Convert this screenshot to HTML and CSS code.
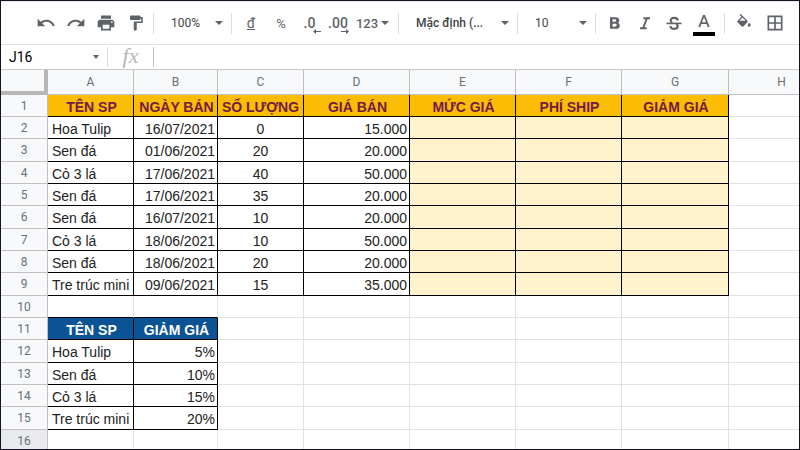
FILE: index.html
```html
<!doctype html>
<html lang="vi">
<head>
<meta charset="utf-8">
<title>Bảng tính</title>
<link rel="stylesheet" href="styles.css">
</head>

<body>
<div class="app">
	<div class="toolbar">
		<button type="button" aria-label="Hoàn tác"><svg width="20" height="20" viewBox="0 0 24 24"><path d="M12.500 8c-2.650 0-5.050.990-6.900 2.600L2 7v9h9l-3.620-3.620c1.390-1.160 3.160-1.880 5.120-1.880 3.540 0 6.550 2.310 7.600 5.500l2.370-.78C21.080 11.030 17.150 8 12.500 8z"/></svg></button>
		<button type="button" aria-label="Làm lại"><svg width="20" height="20" viewBox="0 0 24 24"><path d="M18.400 10.600C16.550 8.990 14.150 8 11.500 8c-4.650 0-8.580 3.030-9.960 7.220L3.900 16c1.050-3.190 4.050-5.500 7.600-5.500 1.950 0 3.730.72 5.120 1.880L13 16h9V7l-3.600 3.600z"/></svg></button>
		<button type="button" aria-label="In"><svg width="20" height="20" viewBox="0 0 24 24"><path d="M19 8H5c-1.660 0-3 1.340-3 3v6h4v4h12v-4h4v-6c0-1.660-1.340-3-3-3zm-3 11H8v-5h8v5zm3-7c-.55 0-1-.45-1-1s.45-1 1-1 1 .45 1 1-.45 1-1 1zm-1-9H6v4h12V3z"/></svg></button>
		<button type="button" aria-label="Sao chép định dạng"><svg width="18" height="18" viewBox="0 0 24 24"><path d="M18 4V3c0-.55-.45-1-1-1H5c-.55 0-1 .45-1 1v4c0 .55.45 1 1 1h12c.55 0 1-.45 1-1V6h1v4H9v11c0 .55.45 1 1 1h2c.55 0 1-.45 1-1v-9h8V4h-3z"/></svg></button>
		<span class="sep"></span>
		<span class="dropdown zoom">
			<select aria-label="Thu phóng"><option>100%</option></select>
			<svg width="8" height="4" viewBox="0 0 8 4"><path d="M0 0h8L4 4z"/></svg>
		</span>
		<span class="sep"></span>
		<div class="numbers">
			<button type="button" class="dong">đ</button>
			<button type="button" class="percent">%</button>
			<button type="button" class="decimal less" aria-label="Giảm số thập phân">.0<svg width="8" height="5" viewBox="0 0 8 5"><path d="M3 0v2h5v1H3v2L0 2.500z"/></svg></button>
			<button type="button" class="decimal more" aria-label="Tăng số thập phân">.00<svg width="8" height="5" viewBox="0 0 8 5"><path d="M5 0v2H0v1h5v2l3-2.500z"/></svg></button>
			<button type="button" class="formats">123<svg width="8" height="4" viewBox="0 0 8 4"><path d="M0 0h8L4 4z"/></svg></button>
		</div>
		<span class="sep"></span>
		<span class="dropdown font">
			<select aria-label="Phông chữ"><option>Mặc định (...</option></select>
			<svg width="8" height="4" viewBox="0 0 8 4"><path d="M0 0h8L4 4z"/></svg>
		</span>
		<span class="sep"></span>
		<span class="dropdown size">
			<select aria-label="Cỡ chữ"><option>10</option></select>
			<svg width="8" height="4" viewBox="0 0 8 4"><path d="M0 0h8L4 4z"/></svg>
		</span>
		<span class="sep"></span>
		<div class="format">
			<button type="button" aria-label="In đậm"><svg width="20" height="20" viewBox="0 0 24 24"><path d="M15.600 11.790c.970-.67 1.650-1.770 1.650-2.790 0-2.260-1.750-4-4-4H6v14h8.040c2.090 0 3.710-1.700 3.710-3.790 0-1.520-.86-2.820-2.150-3.420zM9 7.500h3c.83 0 1.500.67 1.500 1.500s-.67 1.500-1.500 1.500H9v-3zm3.500 9H9V13h3.500c.83 0 1.500.67 1.500 1.500s-.67 1.500-1.500 1.500z"/></svg></button>
			<button type="button" aria-label="In nghiêng"><svg width="20" height="20" viewBox="0 0 24 24"><path d="M10 5v2.500h2.600l-3.700 9.500H6v2.500h8V17h-2.600l3.700-9.500H18V5z"/></svg></button>
			<button type="button" aria-label="Gạch ngang"><svg width="20" height="20" viewBox="0 0 24 24"><path d="M3 11.500h18v2H3z"/><path d="M16.500 9c0-2-1.800-3.200-4.300-3.200S8 7 8 8.800c0 1.100.6 1.900 1.800 2.500M14.500 13.500c1.300.6 2 1.300 2 2.500 0 1.800-1.700 3-4.200 3-2.700 0-4.600-1.200-4.600-3.400" fill="none" stroke="#5f6368" stroke-width="2.500"/></svg></button>
			<button type="button" aria-label="Màu chữ"><svg width="22" height="26" viewBox="0 0 22 26"><path d="M10 5h2l4.700 12h-2l-1.100-3H8.400l-1.100 3h-2zm1 2.200L9 12.300h4z"/><path class="ink" d="M0 22h22v4H0z"/></svg></button>
		</div>
		<span class="sep"></span>
		<div class="fill">
			<button type="button" aria-label="Màu nền"><svg width="18" height="18" viewBox="0 0 24 24"><path d="M16.560 8.940L7.620 0 6.210 1.410l2.380 2.380-5.150 5.150c-.59.590-.59 1.540 0 2.120l5.500 5.500c.29.290.68.440 1.060.440s.77-.15 1.060-.44l5.500-5.500c.59-.58.59-1.530 0-2.120zM5.800 9L10 4.800 14.200 9H5.800zM19 11.500s-2 2.170-2 3.500c0 1.100.9 2 2 2s2-.9 2-2c0-1.330-2-3.500-2-3.500z"/></svg></button>
			<button type="button" aria-label="Đường viền"><svg width="20" height="20" viewBox="0 0 24 24"><path d="M3 3v18h18V3H3zm8 16H5v-6h6v6zm0-8H5V5h6v6zm8 8h-6v-6h6v6zm0-8h-6V5h6v6z"/></svg></button>
		</div>
	</div>

	<div class="formula">
		<span class="dropdown namebox">
			<input type="text" value="J16" aria-label="Ô hiện tại">
			<svg width="6" height="4" viewBox="0 0 6 4"><path d="M0 0h6L3 4z"/></svg>
		</span>
		<label for="fx">fx</label>
		<input type="text" id="fx">
	</div>

	<div class="sheet">
		<table>
			<colgroup>
				<col class="w-num"><col class="w-a"><col class="w-b"><col class="w-a">
				<col class="w-d"><col class="w-d"><col class="w-d"><col class="w-g"><col>
			</colgroup>
			<thead>
				<tr><th class="corner"></th><th>A</th><th>B</th><th>C</th><th>D</th><th>E</th><th>F</th><th>G</th><th>H</th></tr>
			</thead>
			<tbody>
				<tr class="data title"><th>1</th><td>TÊN SP</td><td>NGÀY BÁN</td><td>SỐ LƯỢNG</td><td>GIÁ BÁN</td><td>MỨC GIÁ</td><td>PHÍ SHIP</td><td>GIẢM GIÁ</td><td></td></tr>
				<tr class="data"><th>2</th><td>Hoa Tulip</td><td>16/07/2021</td><td>0</td><td>15.000</td><td></td><td></td><td></td><td></td></tr>
				<tr class="data"><th>3</th><td>Sen đá</td><td>01/06/2021</td><td>20</td><td>20.000</td><td></td><td></td><td></td><td></td></tr>
				<tr class="data"><th>4</th><td>Cỏ 3 lá</td><td>17/06/2021</td><td>40</td><td>50.000</td><td></td><td></td><td></td><td></td></tr>
				<tr class="data"><th>5</th><td>Sen đá</td><td>17/06/2021</td><td>35</td><td>20.000</td><td></td><td></td><td></td><td></td></tr>
				<tr class="data"><th>6</th><td>Sen đá</td><td>16/07/2021</td><td>10</td><td>20.000</td><td></td><td></td><td></td><td></td></tr>
				<tr class="data"><th>7</th><td>Cỏ 3 lá</td><td>18/06/2021</td><td>10</td><td>50.000</td><td></td><td></td><td></td><td></td></tr>
				<tr class="data"><th>8</th><td>Sen đá</td><td>18/06/2021</td><td>20</td><td>20.000</td><td></td><td></td><td></td><td></td></tr>
				<tr class="data"><th>9</th><td>Tre trúc mini</td><td>09/06/2021</td><td>15</td><td>35.000</td><td></td><td></td><td></td><td></td></tr>
				<tr class="gap"><th>10</th><td></td><td></td><td></td><td></td><td></td><td></td><td></td><td></td></tr>
				<tr class="sale sale-title"><th>11</th><td>TÊN SP</td><td>GIẢM GIÁ</td><td></td><td></td><td></td><td></td><td></td><td></td></tr>
				<tr class="sale"><th>12</th><td>Hoa Tulip</td><td>5%</td><td></td><td></td><td></td><td></td><td></td><td></td></tr>
				<tr class="sale"><th>13</th><td>Sen đá</td><td>10%</td><td></td><td></td><td></td><td></td><td></td><td></td></tr>
				<tr class="sale"><th>14</th><td>Cỏ 3 lá</td><td>15%</td><td></td><td></td><td></td><td></td><td></td><td></td></tr>
				<tr class="sale"><th>15</th><td>Tre trúc mini</td><td>20%</td><td></td><td></td><td></td><td></td><td></td><td></td></tr>
				<tr class="current"><th>16</th><td></td><td></td><td></td><td></td><td></td><td></td><td></td><td></td></tr>
			</tbody>
		</table>
	</div>
</div>
</body>
</html>
```
FILE: styles.css
```css
*{ margin:0; padding:0; box-sizing:border-box;}
body{ background:#fff; font-family:Roboto,sans-serif; overflow:hidden;}
button,select,input{ border:0; background:none; font-family:inherit; color:#444; outline:none;}
svg{ display:block; fill:#5f6368; flex:none;}
.app{ height:100vh; border:1px solid #14121f; display:flex; flex-direction:column; overflow:hidden;}

/* toolbar */
.toolbar{ height:44px; flex:none; display:flex; align-items:center; padding-left:30px; border-top:1px solid #e8e6ee; border-bottom:1px solid #e0e2e4;}
.toolbar button{ width:30px; height:28px; flex:none; display:flex; align-items:center; justify-content:center; font-size:13px; font-weight:500; color:#5f6368;}
.sep{ width:1px; height:21px; flex:none; background:#dadce0;}
.toolbar button + .sep{ margin-left:2px;}
.dropdown{ display:grid; align-items:center; flex:none;}
.dropdown select,.dropdown input,.dropdown svg{ grid-area:1/1;}
.dropdown select{ width:100%; height:28px; padding-left:17px; appearance:none; font-size:12px;}
.dropdown svg{ justify-self:end; margin-right:8px; pointer-events:none;}
.zoom{ width:77px;}
.font{ width:118px;}
.dropdown.font select{ font-weight:500;}
.size{ width:77px;}
.numbers,.format,.fill{ display:flex;}
.numbers{ padding:0 6px 0 4px;}
.toolbar .dong{ text-decoration:underline; font-size:14px; font-weight:400;}
.toolbar .percent{ font-size:13px; font-weight:400;}
.toolbar .decimal{ position:relative; font-size:14px;}
.toolbar .less{ width:27px;}
.decimal svg{ position:absolute; right:4px; bottom:3px;}
.decimal.less svg{ right:2px;}
.toolbar .formats{ width:39px; gap:3px;}
.format{ padding:0 6px 0 4px;}
.format button:nth-child(even){ width:29px;}
.fill{ padding-left:4px; gap:1px;}
.ink{ fill:#000;}

/* name box and formula bar */
.formula{ height:25px; flex:none; display:flex; align-items:center; border-bottom:1px solid #c8cacc;}
.formula .namebox{ width:107px; border-right:1px solid #dadce0;}
.namebox input{ width:100%; height:20px; padding-left:8px; font-size:14px; color:#000;}
.formula label{ width:46px; height:20px; text-align:center; font:italic 22px/18px "Liberation Serif",serif; color:#b4b6b8; border-right:1px solid #c0c0c0;}
#fx{ flex:1; height:20px; padding-left:8px;}

/* grid */
.sheet{ flex:1; overflow:hidden;}
table{ width:100%; min-width:834px; table-layout:fixed; border-collapse:separate; border-spacing:0;}
.w-num{ width:47px;}
.w-a{ width:86px;}
.w-b{ width:84px;}
.w-d{ width:106px;}
.w-g{ width:107px;}
th{ background:#f8f9fa; font-size:12px; line-height:16px; font-weight:400; color:#6b6f73; border-right:1px solid #c0c0c0; border-bottom:1px solid #c0c0c0;}
thead th{ height:25px;}
.corner{ border-right:4px solid #b7b7b7; border-bottom:4px solid #b7b7b7;}
td{ height:22px; padding:2px 2px 0 4px; font:14px/16px "Liberation Sans",Arial,sans-serif; color:#222; white-space:nowrap; border-right:1px solid #e1e1e1; border-bottom:1px solid #e1e1e1;}
tr:nth-child(3n) td{ height:23px;}
td:nth-child(3){ text-align:right;}
.data td:nth-child(4){ padding:2px 3px 0; text-align:center;}
.data td:nth-child(5){ text-align:right;}
.data td:not(:last-child){ border-color:#000;}
.data td:nth-child(n+6):not(:last-child){ background:#fff2cc;}
.data.title td:not(:last-child){ background:#fbbc04; color:#741b47; font-weight:700; text-align:center;}
.gap td:nth-child(-n+3){ border-bottom-color:#000;}
.sale td:nth-child(-n+3){ border-color:#000;}
.sale-title td:nth-child(-n+3){ background:#0b5394; color:#fff; font-weight:700; text-align:center;}
.current th{ background:#e8eaed;}
```
